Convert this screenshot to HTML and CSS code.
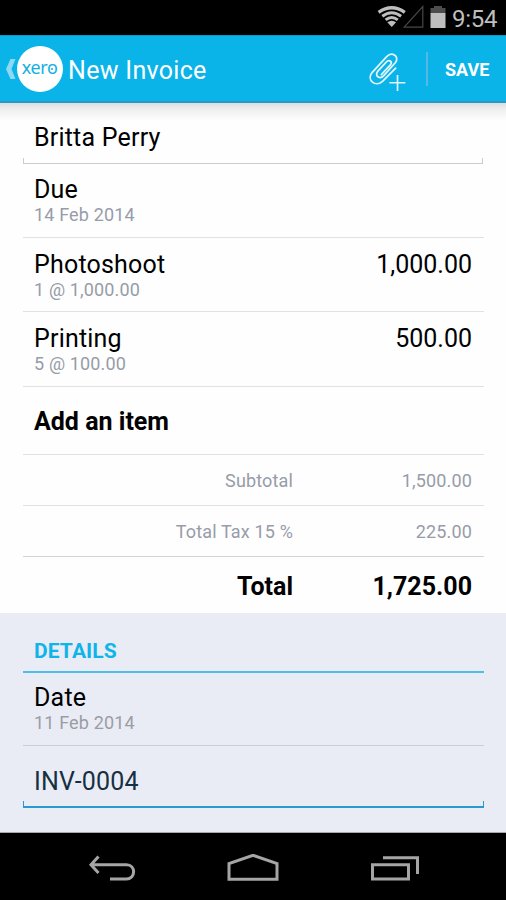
FILE: index.html
```html
<!DOCTYPE html>
<html lang="en">
<head>
<meta charset="utf-8">
<title>New Invoice</title>
<link rel="stylesheet" href="styles.css">
</head>
<body>
<div class="status">
  <svg width="70" height="35" viewBox="0 0 70 35">
    <g fill="none" stroke="#bebebe" stroke-width="3">
      <path d="M2.6 12.3Q15.700 3.400 28.800 12.300" stroke-width="3.400"/>
      <path d="M6.300 16.300Q15.700 9.300 25.100 16.300"/>
      <path d="M9.600 19.900Q15.700 15 21.800 19.900"/>
    </g>
    <path d="M11.300 22.300Q15.700 19.300 20.100 22.300L15.700 27Z" fill="#bebebe"/>
    <path d="M28.200 27.200H46.800V6.600Z" fill="none" stroke="#484848" stroke-width="1.200"/>
    <path d="M54.500 8H58V6H66V8H69.500V13H54.500Z" fill="#4d4d4d"/>
    <path d="M54.500 13H69.500V28H54.500Z" fill="#bebebe"/>
  </svg>
  <span class="clock">9:54</span>
</div>
<header class="bar">
  <svg class="back" width="10" height="20" viewBox="0 0 10 20"><path d="M4.500 0H9.500L5.500 10L9.500 20H4.500L0 10Z" fill="#8dd9f4"/></svg>
  <div class="logo"><span class="wordmark">xero</span></div>
  <h1 class="title">New Invoice</h1>
  <svg class="clip" width="40" height="40" viewBox="0 0 40 41" fill="none" stroke="#e2f6fd">
    <path d="M29.700 17.300L16.500 30.600C9 37.500 -.5 29.500 5.500 21.800L20.500 5.500C26 -.5 34 5.500 29.500 11.500L17.500 25C13.500 29.500 7.500 25 11.500 20.300L20.500 10.600C23.500 8 26.800 11 24.300 14L15 24" transform="translate(.2 .3)" stroke-width="1.800" stroke-linecap="round"/>
    <path d="M23.500 32.500H39.800M31.800 24.500V41" stroke-width="1.700"/>
  </svg>
  <i class="divider"></i>
  <span class="save">SAVE</span>
</header>
<main class="invoice">
  <div class="field contact"><span class="big name">Britta Perry</span></div>
  <div class="row due"><div><div class="big name">Due</div><div class="small">14 Feb 2014</div></div></div>
  <div class="row item"><div><div class="big name">Photoshoot</div><div class="small">1 @ 1,000.00</div></div><div class="big">1,000.00</div></div>
  <div class="row item"><div><div class="big name">Printing</div><div class="small">5 @ 100.00</div></div><div class="big">500.00</div></div>
  <div class="row add"><div class="big bold">Add an item</div></div>
  <div class="sum small"><span>Subtotal</span><span>1,500.00</span></div>
  <div class="sum small tax"><span>Total Tax 15 %</span><span>225.00</span></div>
  <div class="sum total big bold"><span>Total</span><span>1,725.00</span></div>
</main>
<section class="details">
  <h2 class="heading">DETAILS</h2>
  <div class="row date"><div><div class="big name">Date</div><div class="small">11 Feb 2014</div></div></div>
  <div class="field number"><span class="big name">INV-0004</span></div>
</section>
<nav class="nav">
  <svg width="48" height="30" viewBox="0 0 48 30" fill="none" stroke="#a5a5a5" stroke-width="3"><path d="M10.500 2.500L3 10.700L10.500 18.900M3 10.700H38.500C48 10.700 48 25 38.500 25H22"/></svg>
  <svg width="54" height="30" viewBox="0 0 54 30" fill="none" stroke="#a5a5a5" stroke-width="3"><path d="M3 25.300V9.500L27 1.300L51 9.500V25.300Z"/></svg>
  <svg width="50" height="30" viewBox="0 0 50 30" fill="none" stroke="#a5a5a5" stroke-width="3"><path d="M2.500 10.800H38.500V25H2.500ZM13 3.700H47.500V20"/></svg>
</nav>
</body>
</html>
```

FILE: styles.css
```css
* { box-sizing: border-box; }
body { margin: 0; width: 506px; height: 900px; overflow: hidden; background: #fefefe; font-family: Roboto, sans-serif; color: #000; }
svg { display: block; flex: none; }

.status { height: 35px; background: #000; display: flex; justify-content: flex-end; padding-right: 9px; }
.clock { width: 45px; margin-left: 6px; font-size: 24px; line-height: 38px; letter-spacing: -.3px; color: #bebebe; text-align: right; white-space: nowrap; }

.bar { height: 68px; background: #0ab3e8; border-top: 1px solid #079bcb; border-bottom: 2px solid #2899c4; display: flex; align-items: center; padding: 0 16px 0 6px; color: #fff; }
.back { margin-right: 1px; }
.logo { width: 46px; height: 46px; padding-right: 1px; border-radius: 50%; background: #fff; color: #0eb0e2; display: flex; justify-content: center; font-family: "Open Sans", sans-serif; font-size: 18px; line-height: 43px; letter-spacing: -.5px; }
.wordmark { position: relative; -webkit-text-stroke: .1px #0eb0e2; }
.wordmark::after { content: ""; position: absolute; right: 4px; top: 22px; width: 2px; height: 2px; border-radius: 50%; background: #0eb0e2; }
.title { margin: 5px auto 0 5px; font-size: 25px; font-weight: 400; line-height: 30px; letter-spacing: .3px; white-space: nowrap; }
.clip { margin-right: 20px; margin-top: 5px; }
.divider { width: 2px; height: 34px; background: #56b8e5; margin-right: 17px; }
.save { width: 45px; margin-top: 2px; font-size: 18px; font-weight: 700; line-height: 24px; white-space: nowrap; }

.invoice { height: 510px; padding: 0 22px 0 23px; background: linear-gradient(#dedede, #f0f0f0 7px, #fefefe 18px); }
.big { font-size: 25px; line-height: 30px; white-space: nowrap; }
.name { letter-spacing: .2px; }
.small { font-size: 18px; line-height: 22px; color: #979ca8; white-space: nowrap; letter-spacing: .15px; }
.big + .small { margin-top: -1px; }
.bold { font-weight: 700; }
.row { display: flex; justify-content: space-between; padding: 0 12px 0 11px; border-bottom: 1px solid #e2e2e2; }

.field { position: relative; padding-left: 11px; border-bottom: 1px solid #ccc; }
.field::after { content: ""; position: absolute; left: 0; right: 0; bottom: 0; height: 5px; border: solid #ccc; border-width: 0 1px; }
.contact { height: 61px; margin-right: 1px; padding-top: 20px; }
.due { height: 74px; padding-top: 11px; }
.due .small { margin-top: -1px; }
.item { height: 74px; padding-top: 12px; }
.item + .item { height: 75px; }
.add { height: 68px; padding-top: 20px; }

.sum { display: grid; grid-template-columns: 270px 1fr; height: 51px; padding-right: 12px; padding-top: 15px; border-bottom: 1px solid #e2e2e2; text-align: right; }
.tax { border-color: #d3d3d3; }
.total { height: 56px; padding-top: 15px; border: 0; }

.details { height: 220px; padding: 26px 22px 0 23px; background: #e9ecf5; border-bottom: 1px solid #a5a8ae; }
.heading { margin: 0; height: 34px; padding-left: 11px; border-bottom: 2px solid #4dbfe9; color: #0fb5ea; font-size: 21px; font-weight: 700; line-height: 24px; letter-spacing: .1px; }
.date { height: 73px; padding-top: 10px; border-color: #cbced5; }
.details .small { color: #999da5; }
.number { height: 62px; padding-top: 21px; border-bottom: 2px solid #299ad0; color: #172f43; }
.number::after { border-color: #299ad0; }

.nav { height: 67px; background: #000; display: flex; padding: 21px 86px 0 88px; justify-content: space-between; }
```
